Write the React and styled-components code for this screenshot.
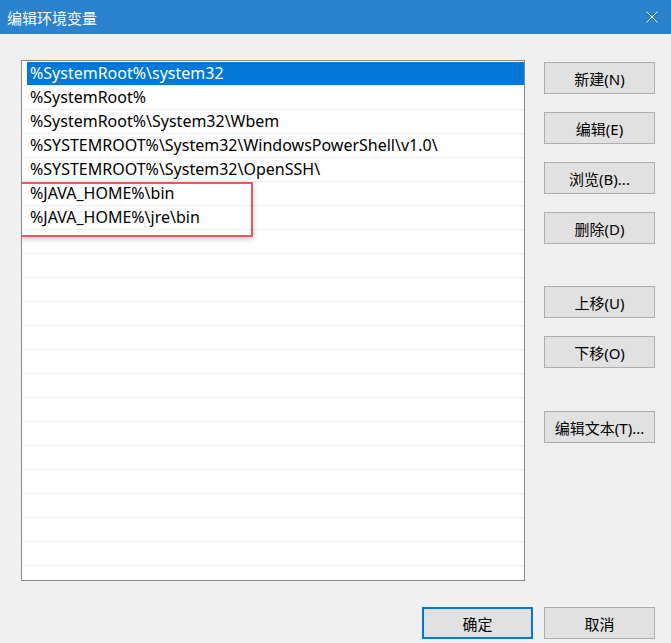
import React from "react";
import styled, { createGlobalStyle } from "styled-components";

const GlobalStyle = createGlobalStyle`
  body {
    margin: 0;
    background: #f0f0f0;
    font-family: "Noto Sans", "Noto Sans CJK SC", sans-serif;
  }
`;

const Window = styled.div`
  width: 671px;
  height: 643px;
  display: flex;
  flex-direction: column;
  background: #f0f0f0;
  overflow: hidden;
`;

const TitleBar = styled.div`
  height: 34px;
  flex-shrink: 0;
  background: #2b82cd;
  color: #fff;
  display: flex;
  align-items: center;
  justify-content: space-between;
  padding: 0 13px 0 7px;
  font-family: "Noto Sans CJK SC", sans-serif;
  font-size: 15px;
`;

const CloseButton = styled.div`
  width: 12px;
  height: 12px;
  display: flex;
`;

const Body = styled.div`
  display: flex;
  flex-direction: column;
  padding: 26px 16px 0 21px;
`;

const Main = styled.div`
  display: flex;
  gap: 19px;
`;

const List = styled.div`
  position: relative;
  width: 502px;
  height: 518px;
  border: 1px solid #828790;
  background: #fff;
  padding-top: 1px;
  box-sizing: content-box;
  overflow: hidden;
`;

const Row = styled.div`
  height: 23px;
  border-bottom: 1px solid #efefef;
  margin-left: 1px;
  display: flex;
`;

const Cell = styled.div`
  flex: 1;
  margin-left: ${(p) => (p.$selected ? "4px" : "0")};
  padding-left: ${(p) => (p.$selected ? "3px" : "7px")};
  background: ${(p) => (p.$selected ? "#0078d7" : "transparent")};
  color: ${(p) => (p.$selected ? "#fff" : "#000")};
  font-size: 16px;
  line-height: 23px;
  white-space: nowrap;
`;

const Highlight = styled.div`
  position: absolute;
  left: -2px;
  top: 121px;
  width: 229px;
  height: 51px;
  border: 2px solid #e9585b;
  box-shadow: 0 2px 6px rgba(0, 0, 0, 0.22);
  pointer-events: none;
`;

const Side = styled.div`
  display: flex;
  flex-direction: column;
  padding-top: 2px;
`;

const Button = styled.button`
  width: 111px;
  height: 32px;
  margin-top: ${(p) => p.$gap || 0}px;
  background: #e1e1e1;
  border: ${(p) => (p.$primary ? "2px solid #0078d7" : "1px solid #adadad")};
  font-family: "Noto Sans", "Noto Sans CJK SC", sans-serif;
  font-size: 15px;
  color: #000;
  padding: 0;
  display: flex;
  align-items: center;
  justify-content: center;
`;

const Footer = styled.div`
  display: flex;
  justify-content: flex-end;
  gap: 11px;
  margin-top: 26px;
`;

const items = [
  "%SystemRoot%\\system32",
  "%SystemRoot%",
  "%SystemRoot%\\System32\\Wbem",
  "%SYSTEMROOT%\\System32\\WindowsPowerShell\\v1.0\\",
  "%SYSTEMROOT%\\System32\\OpenSSH\\",
  "%JAVA_HOME%\\bin",
  "%JAVA_HOME%\\jre\\bin",
];

const sideButtons = [
  { label: "新建(N)", gap: 0 },
  { label: "编辑(E)", gap: 18 },
  { label: "浏览(B)...", gap: 18 },
  { label: "删除(D)", gap: 18 },
  { label: "上移(U)", gap: 42 },
  { label: "下移(O)", gap: 18 },
  { label: "编辑文本(T)...", gap: 43 },
];

export default function App() {
  const rows = [];
  for (let i = 0; i < 22; i++) rows.push(items[i] || "");

  return (
    <>
      <GlobalStyle />
      <Window>
        <TitleBar>
          <span>编辑环境变量</span>
          <CloseButton>
            <svg width="12" height="12" viewBox="0 0 12 12">
              <path d="M0.5 0.5 L11.5 11.5 M11.5 0.5 L0.5 11.5" stroke="#fff" strokeWidth="1" />
            </svg>
          </CloseButton>
        </TitleBar>
        <Body>
          <Main>
            <List>
              {rows.map((text, i) => (
                <Row key={i}>
                  <Cell $selected={i === 0}>{text}</Cell>
                </Row>
              ))}
              <Highlight />
            </List>
            <Side>
              {sideButtons.map((b) => (
                <Button key={b.label} $gap={b.gap}>
                  {b.label}
                </Button>
              ))}
            </Side>
          </Main>
          <Footer>
            <Button $primary>确定</Button>
            <Button>取消</Button>
          </Footer>
        </Body>
      </Window>
    </>
  );
}
